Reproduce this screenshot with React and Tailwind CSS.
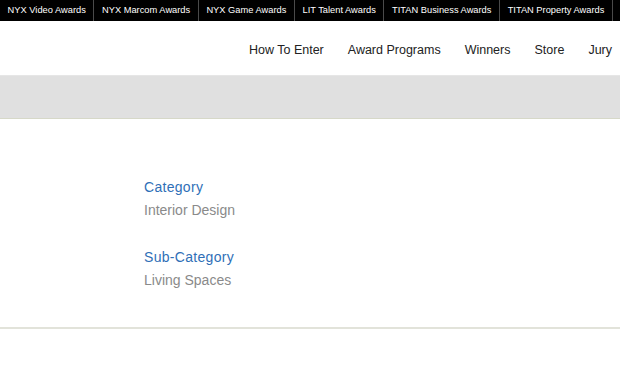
const topLinks = [
  "NYX Video Awards",
  "NYX Marcom Awards",
  "NYX Game Awards",
  "LIT Talent Awards",
  "TITAN Business Awards",
  "TITAN Property Awards",
];

const navLinks = ["How To Enter", "Award Programs", "Winners", "Store", "Jury"];

const details = [
  { label: "Category", value: "Interior Design" },
  { label: "Sub-Category", value: "Living Spaces" },
];

export default function App() {
  return (
    <div className="w-[620px] h-[378px] bg-white overflow-hidden font-['Liberation_Sans',Arial,sans-serif]">
      <div className="h-[21px] bg-black flex items-stretch">
        {topLinks.map((link) => (
          <a
            key={link}
            className="px-[7.6px] flex items-center text-white text-[9.3px] border-r border-[#4a4a4a] whitespace-nowrap"
          >
            {link}
          </a>
        ))}
      </div>

      <nav className="h-[54px] flex items-center justify-end pr-[8px] gap-[24px] pt-[5px]">
        {navLinks.map((link) => (
          <a key={link} className="text-[12.5px] text-[#222]">
            {link}
          </a>
        ))}
      </nav>

      <div className="h-[44px] bg-[#e0e0e0] border-t border-[#e6e6e6] border-b border-b-[#d6d8c8]" />

      <div className="pl-[144px] pt-[59px] h-[208px] flex flex-col gap-[28px]">
        {details.map((d) => (
          <div key={d.label} className="flex flex-col gap-[4px] text-[14px] leading-[19px]">
            <span className="text-[#2f6fb7] tracking-[0.3px]">{d.label}</span>
            <span className="text-[#8a8a8a]">{d.value}</span>
          </div>
        ))}
      </div>

      <div className="h-[2px] bg-[#e2e3da]" />
    </div>
  );
}
